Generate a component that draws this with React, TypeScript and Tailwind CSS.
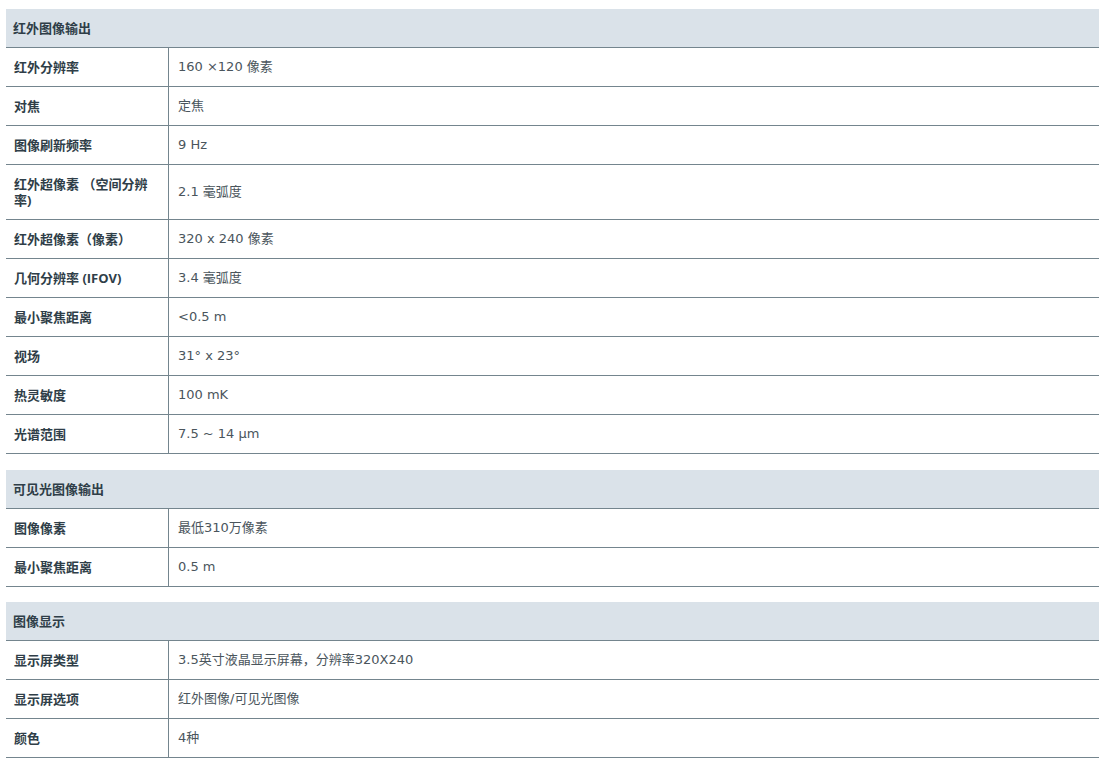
const sections: { title: string; rows: [string, string][] }[] = [
  {
    title: '红外图像输出',
    rows: [
      ['红外分辨率', '160 ×120 像素'],
      ['对焦', '定焦'],
      ['图像刷新频率', '9 Hz'],
      ['红外超像素 （空间分辨率)', '2.1 毫弧度'],
      ['红外超像素（像素）', '320 x 240 像素'],
      ['几何分辨率 (IFOV)', '3.4 毫弧度'],
      ['最小聚焦距离', '<0.5 m'],
      ['视场', '31° x 23°'],
      ['热灵敏度', '100 mK'],
      ['光谱范围', '7.5 ~ 14 µm'],
    ],
  },
  {
    title: '可见光图像输出',
    rows: [
      ['图像像素', '最低310万像素'],
      ['最小聚焦距离', '0.5 m'],
    ],
  },
  {
    title: '图像显示',
    rows: [
      ['显示屏类型', '3.5英寸液晶显示屏幕，分辨率320X240'],
      ['显示屏选项', '红外图像/可见光图像'],
      ['颜色', '4种'],
    ],
  },
];

function App() {
  return (
    <div
      className="min-h-screen bg-white pt-[9px] px-[6px] text-[13px] leading-4"
      style={{ fontFamily: '"Open Sans", "Noto Sans CJK SC", sans-serif' }}
    >
      <div className="w-[1093px] flex flex-col">
        {sections.map((section, i) => (
          <div key={section.title} className={i === 0 ? '' : i === 1 ? 'mt-4' : 'mt-[15px]'}>
            {/* section header */}
            <div className="bg-[#dae2e9] border-b border-[#74858e] px-[7px] py-[11px] font-bold text-[#2f3e48]">
              {section.title}
            </div>
            {section.rows.map(([label, value]) => (
              <div key={label} className="flex border-b border-[#74858e]">
                <div className="w-[163px] shrink-0 border-r border-[#74858e] pl-[8px] pr-[8px] py-[11px] font-bold text-[#2f3e48]">
                  {label}
                </div>
                <div
                  className="flex-1 flex items-center pl-[9px] py-[11px] text-[#4a555c]"
                  style={{ fontFamily: '"DejaVu Sans", "Noto Sans CJK SC", sans-serif' }}
                >
                  {value}
                </div>
              </div>
            ))}
          </div>
        ))}
      </div>
    </div>
  );
}

export default App;
